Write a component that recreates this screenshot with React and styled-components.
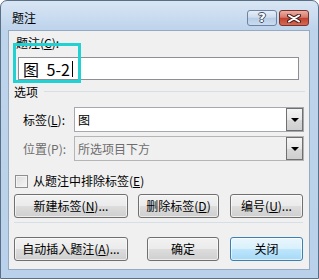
import React from 'react'
import styled, { createGlobalStyle } from 'styled-components'

const Global = createGlobalStyle`
body{
  margin: 0;
  background: #ffffff;
  font-family: "Noto Sans CJK SC", "Liberation Sans", sans-serif;
  font-size: 12px;
}
`
const Frame = styled.div`
width: 319px;
height: 279px;
box-sizing: border-box;
border: 1px solid #5a6e86;
border-radius: 7px 7px 0 0;
background: linear-gradient(to bottom, #d9e6f4 0, #bed4ec 28px, #b9d1ea 100%);
display: flex;
flex-direction: column;
`
const TitleBar = styled.div`
height: 29px;
display: flex;
align-items: flex-start;
padding: 0 9px 0 11px;
`
const Title = styled.div`
margin-top: 9px;
line-height: 16px;
color: #000;
flex: 1;
`
const Caption = styled.div`
margin-top: 9px;
display: flex;
gap: 2px;
`
const CapButton = styled.div`
width: 28px;
height: 14px;
border: 1px solid ${p => p.close ? '#7a322a' : '#6e83a1'};
border-radius: 3px;
display: flex;
align-items: center;
justify-content: center;
background: ${p => p.close
  ? 'linear-gradient(to bottom, #eab0a4 0, #d87a6b 45%, #c1412f 52%, #d56a55 100%)'
  : 'linear-gradient(to bottom, #e6eef8 0, #cddcee 45%, #b7cce5 52%, #cadcf1 100%)'};
color: #fff;
font-weight: bold;
font-size: 13px;
line-height: 14px;
font-family: "DejaVu Sans", sans-serif;
text-shadow: 1px 0 #3d4e66, -1px 0 #3d4e66, 0 1px #3d4e66, 0 -1px #3d4e66;
`
const Client = styled.div`
flex: 1;
margin: 0 8px 8px 7px;
background: #f0f0f0;
border: 1px solid #95a9c0;
position: relative;
display: flex;
flex-direction: column;
color: #000;
`
const Label = styled.div`
line-height: 16px;
padding-left: ${p => p.indent || 7}px;
margin-top: ${p => p.top || 0}px;
color: ${p => p.disabled ? '#6d6d6d' : '#000'};
`
const Input = styled.div`
margin: 6px 0 0 9px;
width: 281px;
height: 23px;
box-sizing: border-box;
border: 1px solid #8e8f94;
background: #fff;
display: flex;
align-items: center;
padding-left: 4px;
font-size: 16px;
word-spacing: 4px;
`
const Caret = styled.span`
display: inline-block;
width: 1px;
height: 16px;
background: #000;
margin-left: 2px;
`
const Group = styled.div`
margin-top: 4px;
padding-left: 5px;
display: flex;
align-items: center;
gap: 6px;
line-height: 16px;
&::after{
  content: '';
  flex: 1;
  height: 1px;
  background: #d5dfe5;
  margin-right: 4px;
  margin-top: -2px;
}
`
const FieldRow = styled.div`
display: flex;
align-items: center;
margin-top: ${p => p.top}px;
height: 25px;
`
const FieldLabel = styled.div`
width: 51px;
padding-left: 14px;
color: ${p => p.disabled ? '#6d6d6d' : '#000'};
`
const Select = styled.div`
width: 230px;
height: 25px;
box-sizing: border-box;
border: 1px solid ${p => p.disabled ? '#b5b5b5' : '#a5a8ae'};
background: ${p => p.disabled ? '#f0f0f0' : '#fff'};
display: flex;
align-items: center;
padding: 0 0 0 3px;
color: ${p => p.disabled ? '#6d6d6d' : '#000'};
`
const SelectText = styled.div`
flex: 1;
`
const DropButton = styled.div`
width: 15px;
height: 21px;
border: 1px solid #707070;
background: linear-gradient(to bottom, #f4f4f4 0, #e8e8e8 50%, #d9d9d9 51%, #cfcfcf 100%);
display: flex;
align-items: center;
justify-content: center;
margin-right: 0px;
&::before{
  content: '';
  border-left: 4px solid transparent;
  border-right: 4px solid transparent;
  border-top: 4px solid #000;
  margin-top: 1px;
}
`
const CheckRow = styled.label`
display: flex;
align-items: center;
gap: 5px;
margin-top: 12px;
padding-left: 6px;
line-height: 16px;
`
const Box = styled.span`
width: 11px;
height: 11px;
border: 1px solid #8e8f8f;
background: linear-gradient(135deg, #dcdcdc 0, #f6f6f6 100%);
box-shadow: inset 0 0 0 1px #f4f4f4;
`
const ButtonRow = styled.div`
display: flex;
padding-left: 5px;
margin-top: ${p => p.top}px;
`
const Button = styled.div`
width: ${p => p.w}px;
margin-left: ${p => p.gap || 0}px;
height: 24px;
box-sizing: border-box;
border: 1px solid ${p => p.active ? '#3c7fb1' : '#707070'};
border-radius: 3px;
background: ${p => p.active
  ? 'linear-gradient(to bottom, #eaf6fd 0, #d9f0fc 48%, #bee6fd 50%, #a7d9f5 100%)'
  : 'linear-gradient(to bottom, #f2f2f2 0, #ebebeb 48%, #dddddd 50%, #cfcfcf 100%)'};
box-shadow: inset 0 0 0 1px rgba(255,255,255,0.6);
display: flex;
align-items: center;
justify-content: center;
line-height: 16px;
`
const Separator = styled.div`
height: 1px;
background: #d5dfe5;
margin: 4px 6px 0 5px;
`
const Highlight = styled.div`
position: absolute;
left: 4px;
top: 12px;
width: 68px;
height: 40px;
box-sizing: border-box;
border: 3px solid #22d2d2;
pointer-events: none;
`

const CloseX = () => (
  <svg width="14" height="9" viewBox="0 0 14 9">
    <path d="M2 1.5 L12 7.5 M12 1.5 L2 7.5" stroke="#4a2320" strokeWidth="4" strokeLinecap="round" />
    <path d="M2 1.5 L12 7.5 M12 1.5 L2 7.5" stroke="#fff" strokeWidth="2" strokeLinecap="round" />
  </svg>
)

const App = () => {
  return (
    <>
      <Global />
      <Frame>
        <TitleBar>
          <Title>题注</Title>
          <Caption>
            <CapButton>?</CapButton>
            <CapButton close><CloseX /></CapButton>
          </Caption>
        </TitleBar>
        <Client>
          <Label top={4}>题注(<u>C</u>):</Label>
          <Input>图 5-2<Caret /></Input>
          <Group>选项</Group>
          <FieldRow top={7}>
            <FieldLabel>标签(<u>L</u>):</FieldLabel>
            <Select>
              <SelectText>图</SelectText>
              <DropButton />
            </Select>
          </FieldRow>
          <FieldRow top={4}>
            <FieldLabel disabled>位置(P):</FieldLabel>
            <Select disabled>
              <SelectText>所选项目下方</SelectText>
              <DropButton />
            </Select>
          </FieldRow>
          <CheckRow>
            <Box />
            <span>从题注中排除标签(<u>E</u>)</span>
          </CheckRow>
          <ButtonRow top={5}>
            <Button w={114}>新建标签(<u>N</u>)...</Button>
            <Button w={81} gap={10}>删除标签(<u>D</u>)</Button>
            <Button w={73} gap={11}>编号(<u>U</u>)...</Button>
          </ButtonRow>
          <Separator />
          <ButtonRow top={14}>
            <Button w={114}>自动插入题注(<u>A</u>)...</Button>
            <Button w={72} gap={19}>确定</Button>
            <Button w={73} gap={11} active>关闭</Button>
          </ButtonRow>
          <Highlight />
        </Client>
      </Frame>
    </>
  )
}

export default App
